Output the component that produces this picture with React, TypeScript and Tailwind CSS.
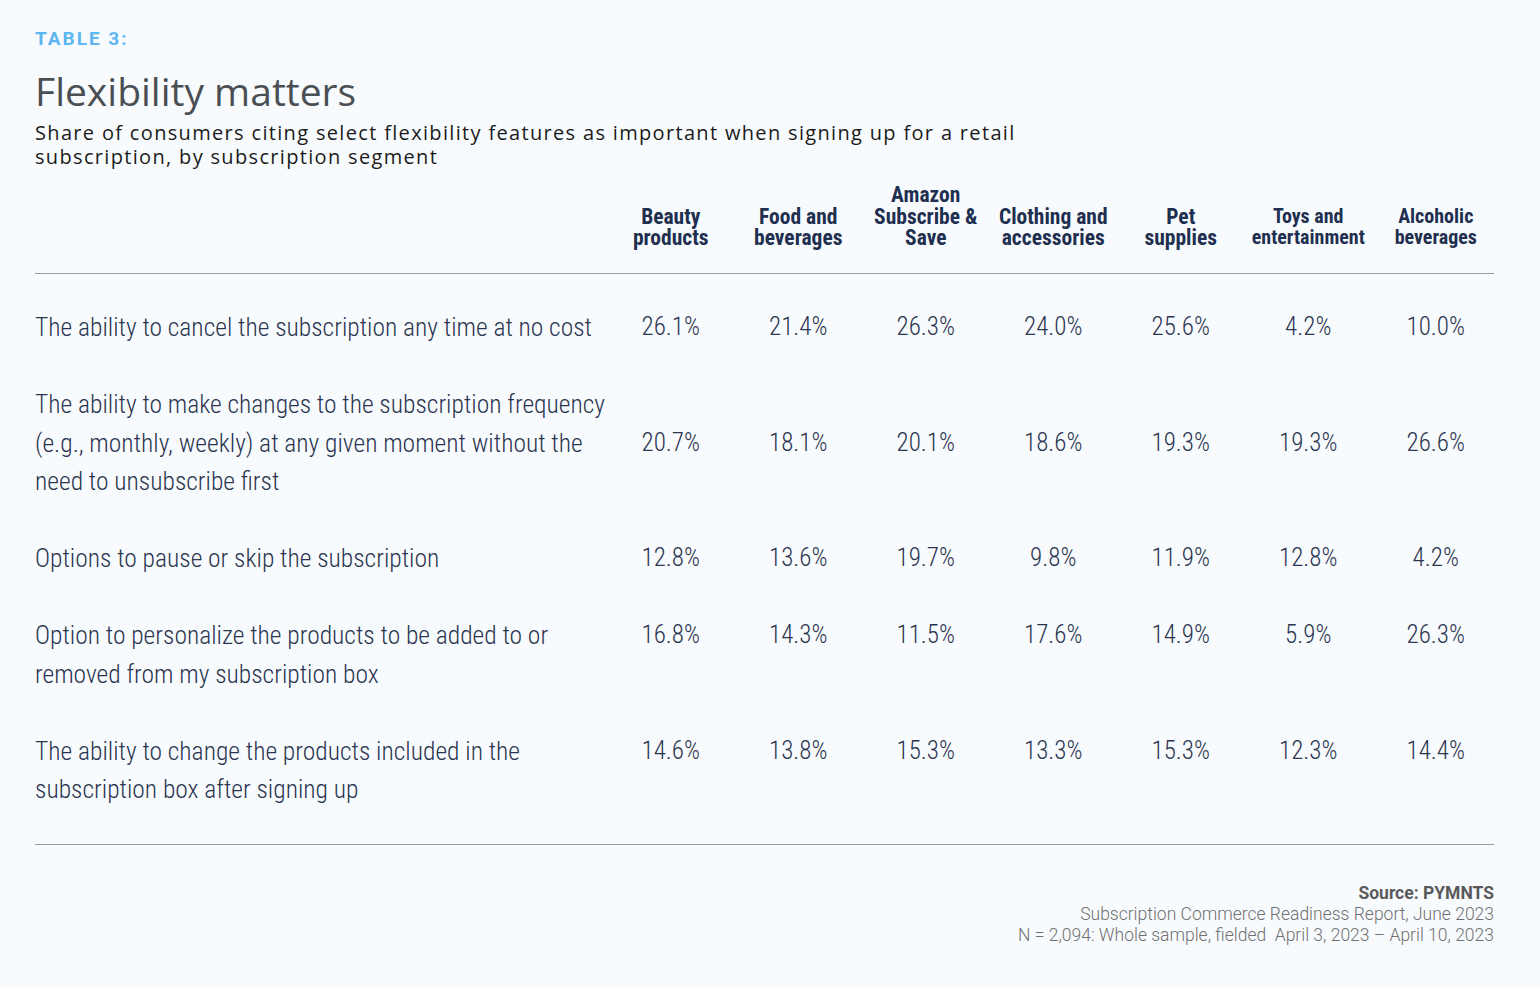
import React from "react";

const cols: { lines: string[]; small?: boolean }[] = [
  { lines: ["Beauty", "products"] },
  { lines: ["Food and", "beverages"] },
  { lines: ["Amazon", "Subscribe &", "Save"] },
  { lines: ["Clothing and", "accessories"] },
  { lines: ["Pet", "supplies"] },
  { lines: ["Toys and", "entertainment"], small: true },
  { lines: ["Alcoholic", "beverages"], small: true },
];

const rows: { label: string[]; vals: string[]; align: "center" | "start" }[] = [
  {
    label: ["The ability to cancel the subscription any time at no cost"],
    vals: ["26.1%", "21.4%", "26.3%", "24.0%", "25.6%", "4.2%", "10.0%"],
    align: "center",
  },
  {
    label: [
      "The ability to make changes to the subscription frequency",
      "(e.g., monthly, weekly) at any given moment without the",
      "need to unsubscribe first",
    ],
    vals: ["20.7%", "18.1%", "20.1%", "18.6%", "19.3%", "19.3%", "26.6%"],
    align: "center",
  },
  {
    label: ["Options to pause or skip the subscription"],
    vals: ["12.8%", "13.6%", "19.7%", "9.8%", "11.9%", "12.8%", "4.2%"],
    align: "center",
  },
  {
    label: ["Option to personalize the products to be added to or", "removed from my subscription box"],
    vals: ["16.8%", "14.3%", "11.5%", "17.6%", "14.9%", "5.9%", "26.3%"],
    align: "start",
  },
  {
    label: ["The ability to change the products included in the", "subscription box after signing up"],
    vals: ["14.6%", "13.8%", "15.3%", "13.3%", "15.3%", "12.3%", "14.4%"],
    align: "start",
  },
];

const cond = { fontFamily: "Roboto, 'Liberation Sans', sans-serif", fontStretch: "75%" } as React.CSSProperties;

export default function App() {
  return (
    <div className="w-[1540px] h-[988px] bg-[#f8fbfe] overflow-hidden">
      <div className="pl-[35px] w-[1494px]">
        <div
          className="pt-[27px] text-[19px] leading-[24px] font-bold tracking-[2px] text-[#5db5f1]"
          style={{ fontFamily: "Roboto, sans-serif" }}
        >
          TABLE 3:
        </div>
        <h1
          className="mt-[18px] text-[39px] leading-[44px] font-medium text-[#4a4f54]"
          style={{ fontFamily: "'Open Sans', sans-serif" }}
        >
          Flexibility matters
        </h1>
        <p
          className="mt-[8px] text-[20px] leading-[24px] tracking-[1.33px] text-[#1b1b1b]"
          style={{ fontFamily: "'Open Sans', sans-serif" }}
        >
          Share of consumers citing select flexibility features as important when signing up for a retail
          <br />
          subscription, by subscription segment
        </p>

        <div className="mt-[15px] border-b border-[#9a9a9a] pb-[24px]">
          <div className="grid grid-cols-[572px_repeat(7,127.5px)] items-end w-[1464.5px]">
            <div />
            {cols.map((c, i) => (
              <div
                key={i}
                className={`text-center leading-[21.5px] font-bold text-[#1f2f50] ${c.small ? "text-[20px]" : "text-[21.5px]"}`}
                style={cond}
              >
                {c.lines.map((l, j) => (
                  <div key={j}>{l}</div>
                ))}
              </div>
            ))}
          </div>
        </div>

        <div className="pt-[15.5px] pb-[15.5px] border-b border-[#9a9a9a]">
          {rows.map((r, i) => (
            <div
              key={i}
              className={`grid grid-cols-[572px_repeat(7,127.5px)] w-[1464.5px] py-[19.25px] ${r.align === "center" ? "items-center" : "items-start"}`}
            >
              <div className="text-[25.5px] leading-[38.5px] font-light text-[#2b3550]" style={cond}>
                {r.label.map((l, j) => (
                  <div key={j}>{l}</div>
                ))}
              </div>
              {r.vals.map((v, j) => (
                <div key={j} className="text-center text-[25px] leading-[38.5px] font-light text-[#2b3550]" style={cond}>
                  {v}
                </div>
              ))}
            </div>
          ))}
        </div>

        <div className="mt-[38px] text-right text-[17.5px] leading-[21px] text-[#707070]" style={{ fontFamily: "Roboto, sans-serif" }}>
          <div className="font-bold text-[#5a5a5a]">Source: PYMNTS</div>
          <div className="font-light">Subscription Commerce Readiness Report, June 2023</div>
          <div className="font-light">N = 2,094: Whole sample, fielded&nbsp; April 3, 2023 – April 10, 2023</div>
        </div>
      </div>
    </div>
  );
}
